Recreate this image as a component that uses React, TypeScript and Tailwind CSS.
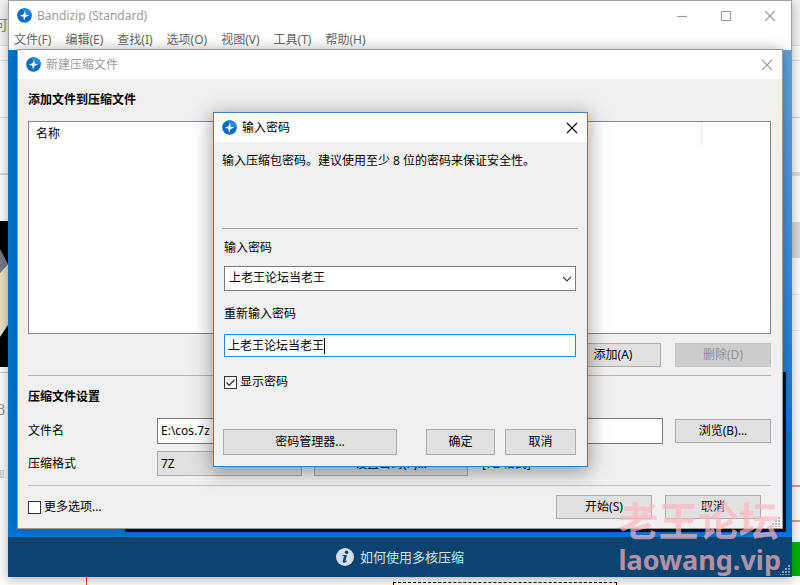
import React, { useState } from 'react';
import clsx from 'clsx';

const MENU_ITEMS = ['文件(F)', '编辑(E)', '查找(I)', '选项(O)', '视图(V)', '工具(T)', '帮助(H)'];

const AppIcon: React.FC = () => (
  <svg viewBox="0 0 16 16" className="h-[15px] w-[15px] shrink-0" aria-hidden="true">
    <circle cx="8" cy="8" r="7.8" fill="#0a6cc9" />
    <path d="M5 .8A7.8 7.8 0 0 1 15.8 8L10 7Z" fill="#2388de" />
    <path d="M8.6 2.8 9.2 7l3.8.9-3.9 1.6-1.6 4L6.8 9.2 3 8.2l3.9-1.6Z" fill="#fff" />
  </svg>
);

const InfoIcon: React.FC = () => (
  <svg viewBox="0 0 18 18" className="h-[18px] w-[18px]" aria-hidden="true">
    <circle cx="9" cy="9" r="9" fill="#d3e0eb" />
    <circle cx="10.6" cy="4.2" r="1.7" fill="#0b4471" />
    <path d="M6.6 7h4.3l-1.5 5.7c-.1.5.4.5 1.2-.2l.4.5c-1.7 2.1-4.8 2.3-4.2 0L8 8H6.4Z" fill="#0b4471" />
  </svg>
);

const ResizeGrip: React.FC<{ className?: string }> = ({ className }) => (
  <svg viewBox="0 0 10 10" className={clsx('absolute h-[10px] w-[10px]', className)} fill="currentColor" aria-hidden="true">
    <path d="M8 0h2v2H8zM5 3h2v2H5zM8 3h2v2H8zM2 6h2v2H2zM5 6h2v2H5zM8 6h2v2H8zM0 9h1v1H0zM2 9h2v1H2zM5 9h2v1H5zM8 9h2v1H8z" />
  </svg>
);

interface TitleBarProps {
  title: string;
  active?: boolean;
  children: React.ReactNode;
}

const TitleBar: React.FC<TitleBarProps> = ({ title, active, children }) => (
  <header className={clsx('flex h-[29px] items-center bg-white pl-2 pr-[7px]', active ? 'text-black' : 'text-[#999]')}>
    <AppIcon />
    <h1 className="ml-[5px] flex-1">{title}</h1>
    {children}
  </header>
);

interface CaptionButtonProps {
  label: string;
  path: string;
}

const CaptionButton: React.FC<CaptionButtonProps> = ({ label, path }) => (
  <button type="button" aria-label={label} className="flex h-4 w-4 items-center justify-center">
    <svg viewBox="0 0 12 12" className="h-3 w-3" fill="none" stroke="currentColor" strokeWidth="1.1">
      <path d={path} />
    </svg>
  </button>
);

const CloseButton: React.FC = () => <CaptionButton label="关闭" path="m1 1 10 10M11 1 1 11" />;

interface PushButtonProps {
  className?: string;
  disabled?: boolean;
  children: React.ReactNode;
}

const PushButton: React.FC<PushButtonProps> = ({ className, disabled, children }) => (
  <button
    type="button"
    disabled={disabled}
    className={clsx(
      'shrink-0 whitespace-nowrap border',
      disabled ? 'border-[#c4c4c4] bg-[#cccccc] text-[#8e8e8e]' : 'border-[#adadad] bg-[#e1e1e1]',
      className,
    )}
  >
    {children}
  </button>
);

interface CheckBoxProps {
  label: string;
  defaultChecked?: boolean;
}

const CheckBox: React.FC<CheckBoxProps> = ({ label, defaultChecked = false }) => {
  const [checked, setChecked] = useState(defaultChecked);

  return (
    <label className="flex items-center gap-[3px]">
      <span className="grid">
        <input
          type="checkbox"
          checked={checked}
          onChange={(e) => setChecked(e.target.checked)}
          className="col-start-1 row-start-1 h-[13px] w-[13px] appearance-none border border-[#333] bg-white"
        />
        {checked && (
          <svg viewBox="0 0 13 13" className="pointer-events-none col-start-1 row-start-1 h-[13px] w-[13px]" fill="none" stroke="#333" strokeWidth="1.3">
            <path d="m2.5 6.5 2.7 2.8 5.3-5.6" />
          </svg>
        )}
      </span>
      {label}
    </label>
  );
};

/* The page that is open behind the windows */
const Backdrop: React.FC = () => (
  <div className="flex h-full justify-between bg-[#fbfbfc]" aria-hidden="true">
    <div className="flex w-2 flex-col overflow-hidden">
      <div className="flex h-[46px] items-center justify-end border-b border-[#dedede] bg-[#f1f1f3] pt-1 text-sm text-[#888]">可</div>
      <div className="h-[15px] border-b border-[#dedede]" />
      <div className="h-[57px] border-b border-[#d5d5d5]" />
      <div className="h-[57px] border-b-2 border-[#d5d5d5]" />
      <div className="h-[46px]" />
      <svg viewBox="0 0 8 146" className="h-[146px] w-2 shrink-0">
        <path d="M0 0h8v146H0z" fill="#000" />
        <path d="m0 28 8 15-8 9Z" fill="#77758c" />
        <path d="m0 52 8-9v61l-8 12Z" fill="#e8dfc2" />
      </svg>
      <div className="h-[6px] border-b border-[#c9c9c9]" />
      <div className="flex h-[74px] items-center justify-end pr-[3px] font-['Liberation_Serif',serif] text-base text-[#888]">8</div>
      <div className="mt-[23px] h-2 w-1 border border-[#ccc] bg-[#e5e5e5]" />
    </div>
    <div className="flex w-2 flex-col">
      <div className="h-[46px] border-b border-[#dedede] bg-[#f1f1f1]" />
      <div className="h-[15px] border-b border-[#dedede]" />
      <div className="h-[57px] border-b border-[#d0d0d0]" />
      <div className="h-[58px] border-b-4 border-[#dcdcdc]" />
      <div className="h-[46px]" />
      <div className="h-9 bg-[#d9d9d9]" />
      <div className="h-[37px] border-b border-[#e8e8e8]" />
      <div className="h-[36px] border-b border-[#e8e8e8]" />
      <div className="h-[156px] border-b-2 border-[#e89090]" />
      <div className="h-[35px] border-b-2 border-[#e89090]" />
      <div className="h-5" />
      <div className="h-[34px] bg-[#00b400]" />
    </div>
  </div>
);

const PasswordDialog: React.FC = () => {
  const [password, setPassword] = useState('上老王论坛当老王');

  return (
    <section className="absolute left-[213px] top-28 w-[375px] border border-[#3585c6] bg-[#f0f0f0] shadow-[0_4px_18px_2px_rgba(0,0,0,0.35)]">
      <TitleBar title="输入密码" active>
        <CloseButton />
      </TitleBar>
      <form className="flex flex-col pb-[11px] pl-[10px] pr-[11px] pt-[10px]" onSubmit={(e) => e.preventDefault()}>
        <div className="-mx-[2px] min-h-[77px] border-b border-[#a0a0a0]">
          <p className="whitespace-nowrap">输入压缩包密码。建议使用至少 8 位的密码来保证安全性。</p>
        </div>
        <label htmlFor="password" className="mt-[10px]">输入密码</label>
        <div className="mt-[9px] grid items-center">
          <select id="password" className="col-start-1 row-start-1 h-[25px] appearance-none border border-[#7a7a7a] bg-white px-1 pb-px">
            <option>上老王论坛当老王</option>
          </select>
          <svg viewBox="0 0 10 6" className="pointer-events-none col-start-1 row-start-1 mr-1 h-[6px] w-[10px] justify-self-end" fill="none" stroke="#444" strokeWidth="1.2">
            <path d="m1 1 4 4 4-4" />
          </svg>
        </div>
        <label htmlFor="confirm" className="mt-[14px]">重新输入密码</label>
        <div className="mt-[11px] flex h-[23px] items-center border border-[#2f86d6] bg-white pl-[3px]">
          <input
            id="confirm"
            value={password}
            onChange={(e) => setPassword(e.target.value)}
            className="field-sizing-content caret-transparent outline-none"
          />
          <span className="h-4 w-px bg-black" />
        </div>
        <div className="mt-4">
          <CheckBox label="显示密码" defaultChecked />
        </div>
        <div className="mt-[38px] flex">
          <PushButton className="-ml-px h-[26px] w-[174px]">密码管理器...</PushButton>
          <PushButton className="ml-auto h-[26px] w-[69px]">确定</PushButton>
          <PushButton className="ml-[10px] h-[26px] w-[71px]">取消</PushButton>
        </div>
      </form>
    </section>
  );
};

const ArchiveDialog: React.FC = () => (
  <section className="absolute left-[17px] right-[17px] top-[49px] border border-[#9a9a9a] bg-[#f0f0f0] shadow-[0_0_12px_rgba(0,0,0,0.3)]">
    <TitleBar title="新建压缩文件">
      <CloseButton />
    </TitleBar>
    <div className="pb-[9px] pl-[10px] pr-[11px] pt-3">
      <h2 className="font-bold">添加文件到压缩文件</h2>
      <table className="mt-3 block h-[213px] border border-[#828790] bg-white">
        <thead className="block">
          <tr className="flex h-6">
            <th className="flex-1 border-r border-[#ececec] pl-[7px] pt-[3px] text-left font-normal">名称</th>
            <th className="w-[68px]" />
          </tr>
        </thead>
      </table>
      <div className="flex justify-end gap-[14px] border-b border-[#b4b4b4] pb-2 pt-[9px]">
        <PushButton className="h-6 w-24">添加(A)</PushButton>
        <PushButton className="h-6 w-24" disabled>删除(D)</PushButton>
      </div>

      <h2 className="mt-3 font-bold">压缩文件设置</h2>
      <div className="mt-3 flex items-center">
        <label htmlFor="filename" className="w-[129px]">文件名</label>
        <input id="filename" defaultValue="E:\cos.7z" className="h-[26px] min-w-0 flex-1 border border-[#7a7a7a] bg-white px-[3px] pb-px" />
        <PushButton className="ml-3 h-6 w-24">浏览(B)...</PushButton>
      </div>
      <div className="mt-[7px] flex items-center border-b border-[#c0c0c0] pb-[9px]">
        <label htmlFor="format" className="w-[129px]">压缩格式</label>
        <select id="format" className="h-[25px] w-[145px] appearance-none border border-[#adadad] bg-[#e1e1e1] px-[3px]">
          <option>7Z</option>
        </select>
        <PushButton className="ml-3 h-[25px] w-[154px]">设置密码(P)...</PushButton>
        <a href="#format" className="ml-[14px] text-[#0000ff]">[7Z 格式]</a>
      </div>
      <div className="mt-[9px] flex items-center pr-[10px]">
        <CheckBox label="更多选项..." />
        <PushButton className="ml-auto h-6 w-24">开始(S)</PushButton>
        <PushButton className="ml-[13px] h-6 w-24">取消</PushButton>
      </div>
    </div>
    <ResizeGrip className="bottom-px right-[2px] text-[#bcbcbc]" />
  </section>
);

const MainWindow: React.FC = () => (
  <main className="absolute inset-x-2 bottom-2 top-0 flex flex-col bg-white shadow-[0_2px_10px_rgba(0,0,0,0.3)]">
    <div className="border-x border-t border-[#a0a0a0]">
      <TitleBar title="Bandizip (Standard)">
        <div className="mr-[6px] flex gap-[28px]">
          <CaptionButton label="最小化" path="M1 6.5h10" />
          <CaptionButton label="最大化" path="M1.5 1.5h9v9h-9z" />
          <CloseButton />
        </div>
      </TitleBar>
      <nav className="flex h-5 items-center gap-[14px] pl-[5px] text-[#666]">
        {MENU_ITEMS.map((item) => (
          <button key={item} type="button">{item}</button>
        ))}
      </nav>
    </div>
    <div className="flex flex-1 flex-col justify-end bg-linear-to-tr from-[#0078d7] from-60% to-[#5fa3df]">
      <div className="mb-[5px] ml-[117px] mr-[6px] h-[160px] bg-[#081019]" />
    </div>
    <footer className="flex h-10 items-center justify-center gap-[6px] bg-[#0b4471] text-[#d3e0eb]">
      <InfoIcon />
      <span className="text-[13px]">如何使用多核压缩</span>
    </footer>
    <ResizeGrip className="bottom-[2px] right-[2px] text-[#7f9fb9]" />
  </main>
);

export default function App() {
  return (
    <div className="relative h-screen overflow-hidden bg-white font-['Noto_Sans','Noto_Sans_CJK_SC',sans-serif] text-xs leading-[18px] text-black">
      <Backdrop />
      <div className="absolute bottom-0 left-[86px] h-2 w-px bg-[#e04040]" />
      <div className="absolute bottom-0 left-[393px] h-[3px] w-[224px] border-x border-t border-dashed border-black" />
      <MainWindow />
      <ArchiveDialog />
      <PasswordDialog />
      <div className="pointer-events-none absolute bottom-[9px] right-[19px] font-bold text-[#ffb6c1]/70">
        <p className="text-[40px] leading-[46px]">老王论坛</p>
        <p className="text-[27px] leading-8">laowang.vip</p>
      </div>
    </div>
  );
}
